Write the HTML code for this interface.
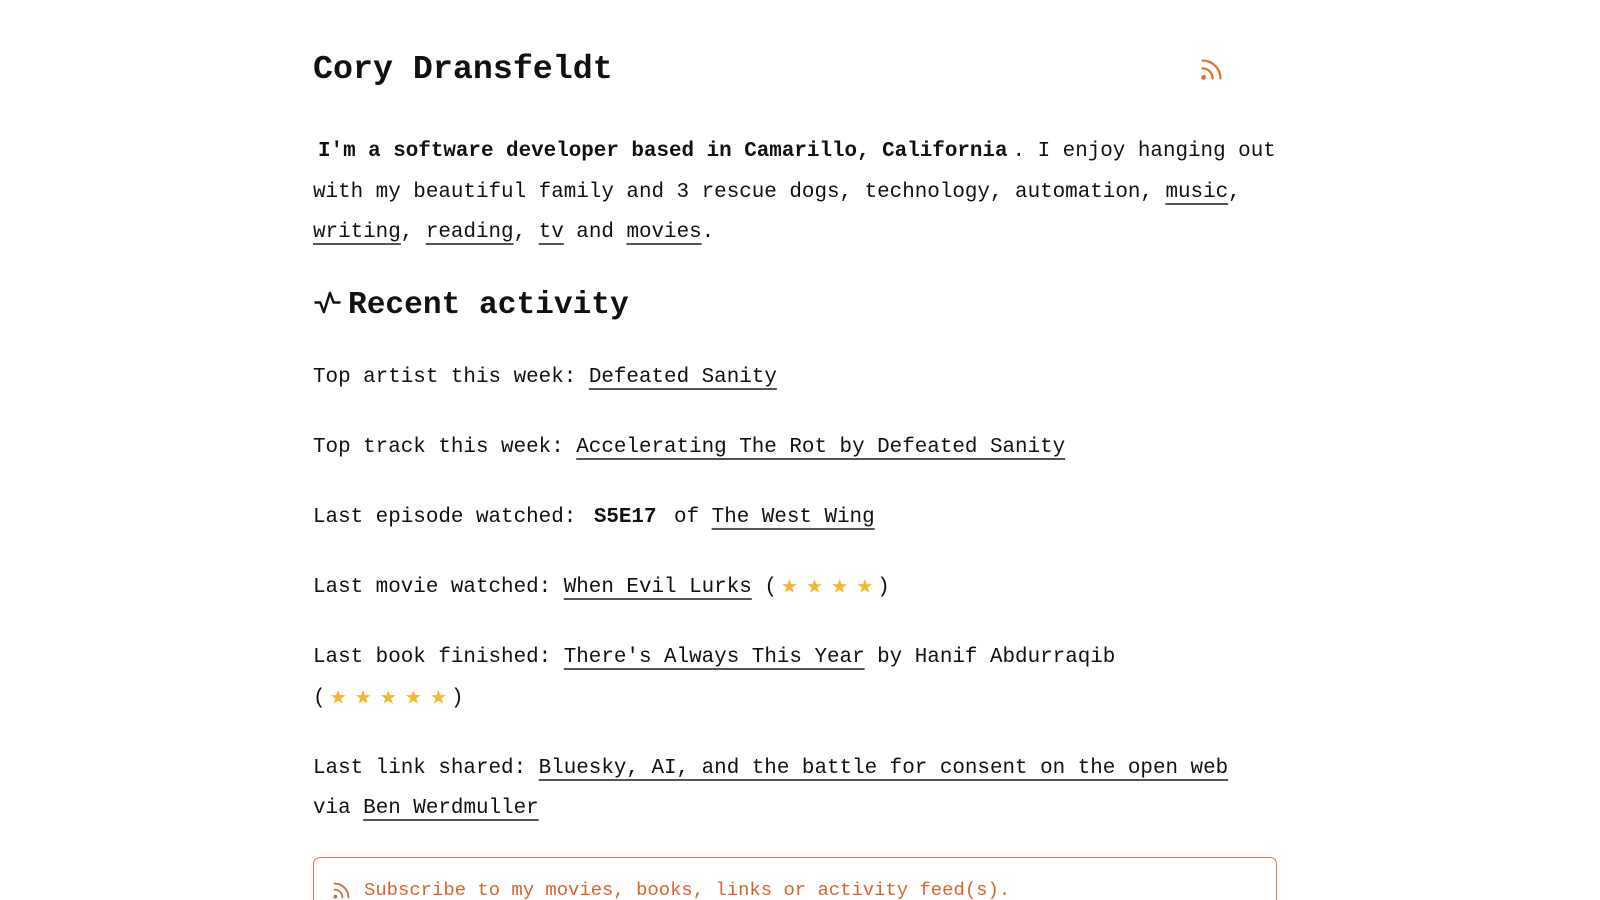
<!DOCTYPE html>
<html><head><meta charset="utf-8"><style>
html,body{margin:0;background:#fff;height:900px;overflow:hidden;}
body{font-family:"Liberation Mono","DejaVu Sans Mono",monospace;font-size:20.9px;color:#111;line-height:40.5px;position:relative;}
.wrap{position:absolute;left:313px;width:964.5px;top:0;}
h1{position:absolute;top:44px;left:0;margin:0;font-size:33.3px;line-height:50px;font-weight:bold;}
.rss{position:absolute;left:885px;top:56px;}
p{margin:0;}
a{color:#111;text-decoration:underline;text-underline-offset:6px;text-decoration-thickness:1.5px;text-decoration-color:#555;}
.intro{position:absolute;top:132px;left:0;width:964.5px;}
strong{padding:0 5px;}
h2{position:absolute;top:283px;left:0;margin:0;font-size:31.2px;line-height:46px;}
.act{position:absolute;top:358px;left:0;width:964.5px;}
.act p{margin-bottom:29.5px;}
.nw{white-space:nowrap;}
.st{display:inline-block;width:25.1px;text-align:center;color:#f5b82a;font-size:27px;vertical-align:-1px;line-height:20px;}
.box{position:absolute;top:857px;left:0;width:962px;height:80px;border:1.5px solid #e9783f;border-radius:7px;}
.box span{position:absolute;left:50px;top:12px;color:#d9642a;font-size:18.9px;line-height:40px;}
</style></head><body><div class="wrap">
<h1>Cory Dransfeldt</h1>
<svg class="rss" width="27" height="27" viewBox="0 0 24 24" fill="none" stroke="#e2702f" stroke-width="2" stroke-linecap="round"><path d="M4 11a9 9 0 0 1 9 9"/><path d="M4 4a16 16 0 0 1 16 16"/><circle cx="5" cy="19" r="1.2" fill="#e2702f"/></svg>
<p class="intro"><strong>I'm a software developer based in Camarillo, California</strong>. I enjoy hanging out with my beautiful family and 3 rescue dogs, technology, automation, <a>music</a>, <a>writing</a>, <a>reading</a>, <a>tv</a> and <a>movies</a>.</p>
<h2><svg width="29" height="29" viewBox="0 0 24 24" fill="none" stroke="#111" stroke-width="2" stroke-linecap="round" stroke-linejoin="round" style="vertical-align:-4px;margin-right:6px"><path d="M2 12h4l3 8 5-16 3 8h5"/></svg>Recent activity</h2>
<div class="act">
<p>Top artist this week: <a>Defeated Sanity</a></p>
<p>Top track this week: <a>Accelerating The Rot by Defeated Sanity</a></p>
<p>Last episode watched: <strong>S5E17</strong> of <a>The West Wing</a></p>
<p>Last movie watched: <a>When Evil Lurks</a> <span class="nw">(<span class="st">★</span><span class="st">★</span><span class="st">★</span><span class="st">★</span>)</span></p>
<p>Last book finished: <a>There's Always This Year</a> by Hanif Abdurraqib <span class="nw">(<span class="st">★</span><span class="st">★</span><span class="st">★</span><span class="st">★</span><span class="st">★</span>)</span></p>
<p>Last link shared: <a>Bluesky, AI, and the battle for consent on the open web</a> via <a>Ben Werdmuller</a></p>
</div>
<div class="box"><svg style="position:absolute;left:17px;top:22px" width="21" height="21" viewBox="0 0 24 24" fill="none" stroke="#d9642a" stroke-width="2" stroke-linecap="round"><path d="M4 11a9 9 0 0 1 9 9"/><path d="M4 4a16 16 0 0 1 16 16"/><circle cx="5" cy="19" r="1.2" fill="#d9642a"/></svg><span>Subscribe to my movies, books, links or activity feed(s).</span></div>
</div></body></html>
